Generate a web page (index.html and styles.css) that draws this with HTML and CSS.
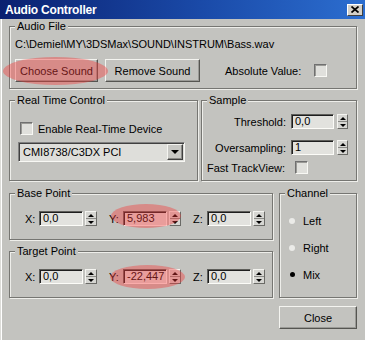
FILE: index.html
```html
<!DOCTYPE html>
<html>
<head>
<meta charset="utf-8">
<title>Audio Controller</title>
<link rel="stylesheet" href="styles.css">
</head>
<body>
<div class="window">
  <div class="titlebar">
    <span class="title">Audio Controller</span>
    <span class="tb-close"><svg width="8" height="7" viewBox="0 0 8 7"><path d="M0.5 0.5 L7.5 6.5 M7.5 0.5 L0.5 6.5" stroke="#000" stroke-width="1.7" fill="none"/></svg></span>
  </div>
  <div class="content">
    <div class="group audio">
      <span class="legend">Audio File</span>
      <div class="path">C:\Demiel\MY\3DSMax\SOUND\INSTRUM\Bass.wav</div>
      <div class="audio-row">
        <div class="marked">
          <button class="btn btn-choose">Choose Sound</button>
          <span class="mark mark-choose"></span>
        </div>
        <button class="btn btn-remove">Remove Sound</button>
        <span class="abs-label">Absolute Value:</span>
        <span class="check"></span>
      </div>
    </div>

    <div class="row2">
      <div class="group rtc">
        <span class="legend">Real Time Control</span>
        <div class="check-row"><span class="check"></span><span class="check-text">Enable Real-Time Device</span></div>
        <div class="combo"><span class="combo-text">CMI8738/C3DX PCI</span><span class="combo-btn"><span class="tri-down"></span></span></div>
      </div>
      <div class="group sample">
        <span class="legend">Sample</span>
        <div class="srow r1"><span class="slabel">Threshold:</span><span class="field fw43">0,0</span><span class="spin s-sample"><span class="up"></span><span class="down"></span></span></div>
        <div class="srow r2"><span class="slabel">Oversampling:</span><span class="field fw43">1</span><span class="spin s-sample"><span class="up"></span><span class="down"></span></span></div>
        <div class="srow r3"><span class="flabel">Fast TrackView:</span><span class="check"></span></div>
      </div>
    </div>

    <div class="row3">
      <div class="points">
        <div class="group pt">
          <span class="legend">Base Point</span>
          <div class="xyz">
            <div class="coord"><span class="lbl">X:</span><span class="field fw44">0,0</span><span class="spin"><span class="up"></span><span class="down"></span></span></div>
            <div class="coord"><span class="lbl">Y:</span><span class="field fw44">5,983</span><span class="spin"><span class="up"></span><span class="down"></span></span><span class="mark mark-y1"></span></div>
            <div class="coord"><span class="lbl">Z:</span><span class="field fw44">0,0</span><span class="spin"><span class="up"></span><span class="down"></span></span></div>
          </div>
        </div>
        <div class="group pt">
          <span class="legend">Target Point</span>
          <div class="xyz">
            <div class="coord"><span class="lbl">X:</span><span class="field fw44">0,0</span><span class="spin"><span class="up"></span><span class="down"></span></span></div>
            <div class="coord"><span class="lbl">Y:</span><span class="field fw44">-22,447</span><span class="spin"><span class="up"></span><span class="down"></span></span><span class="mark mark-y2"></span></div>
            <div class="coord"><span class="lbl">Z:</span><span class="field fw44">0,0</span><span class="spin"><span class="up"></span><span class="down"></span></span></div>
          </div>
        </div>
      </div>
      <div class="group channel">
        <span class="legend">Channel</span>
        <div class="radio"><span class="dot"></span>Left</div>
        <div class="radio"><span class="dot"></span>Right</div>
        <div class="radio"><span class="dot on"></span>Mix</div>
      </div>
    </div>

    <div class="close-row">
      <button class="btn btn-close">Close</button>
    </div>
  </div>
</div>
</body>
</html>
```

FILE: styles.css
```css
* { box-sizing: border-box; }
html, body { margin: 0; padding: 0; background: #c3c3bf; }

.window {
  width: 365px;
  height: 340px;
  overflow: hidden;
  background: #c3c3bf;
  font-family: "Liberation Sans", Arial, sans-serif;
  font-size: 11px;
  color: #000;
  box-shadow: inset 1px 0 0 #dcdcd8, inset 2px 0 0 #ffffff;
}

.titlebar {
  height: 19px;
  display: flex;
  align-items: center;
  justify-content: space-between;
  padding: 0 2px 0 5px;
  background: linear-gradient(90deg, #0a2070 0%, #1a4aa8 55%, #2c6ed0 100%);
}
.title {
  color: #fff;
  font-weight: bold;
  font-size: 12px;
  letter-spacing: -0.2px;
}
.tb-close {
  width: 16px;
  height: 12px;
  display: flex;
  align-items: center;
  justify-content: center;
  background: #d4d0c8;
  border: 1px solid;
  border-color: #fff #404040 #404040 #fff;
}

.content { padding: 7px 8px 0 9px; }

.group {
  position: relative;
  border: 1px solid #767672;
  box-shadow: inset 1px 1px 0 #eeeeea, 1px 1px 0 #eeeeea;
}
.legend {
  position: absolute;
  top: -8px;
  left: 5px;
  padding: 0 2px;
  line-height: 14px;
  background: #c3c3bf;
  white-space: nowrap;
}

/* Audio file */
.audio { height: 63px; padding-left: 5px; }
.path { margin-top: 10px; line-height: 14px; }
.audio-row { display: flex; align-items: center; margin-top: 8px; }
.marked { position: relative; display: flex; }

.btn {
  height: 23px;
  padding: 0;
  font: inherit;
  color: #000;
  background: #c3c3bf;
  border: 1px solid;
  border-color: #f4f4f0 #555551 #555551 #f4f4f0;
  box-shadow: inset -1px -1px 0 #9a9a96;
}
.btn-choose { width: 83px; }
.btn-remove { width: 95px; margin-left: 7px; }
.abs-label { margin-left: 25px; width: 89px; }

.check {
  display: inline-block;
  width: 13px;
  height: 13px;
  flex: none;
  background: #e0e0dc;
  border: 1px solid;
  border-color: #707070 #f8f8f4 #f8f8f4 #707070;
  box-shadow: inset 1px 1px 0 #9a9a96;
}

.mark {
  position: absolute;
  border-radius: 50%;
  background: rgba(245, 55, 55, 0.4);
  pointer-events: none;
}
.mark-choose { left: -12px; top: -2px; width: 105px; height: 28px; }
.mark-y1 { left: 2px; top: -7px; width: 70px; height: 24px; }
.mark-y2 { left: 1px; top: -4px; width: 75px; height: 24px; }

/* Row 2 */
.row2 {
  display: grid;
  grid-template-columns: 189px 156px;
  column-gap: 3px;
  margin-top: 11px;
  height: 81px;
}
.rtc { padding-left: 8px; }
.check-row { display: flex; align-items: center; height: 13px; margin-top: 21px; padding-left: 2px; }
.check-text { margin-left: 5px; }
.combo {
  display: flex;
  align-items: center;
  width: 167px;
  height: 20px;
  margin-top: 7px;
  padding: 0 1px 0 4px;
  background: #dededa;
  border: 1px solid;
  border-color: #808080 #f8f8f4 #f8f8f4 #808080;
  box-shadow: inset 1px 1px 0 #404040;
}
.combo-text { flex: 1; }
.combo-btn {
  width: 16px;
  height: 16px;
  display: flex;
  align-items: center;
  justify-content: center;
  background: #c8c8c4;
  border: 1px solid;
  border-color: #f4f4f0 #404040 #404040 #f4f4f0;
  box-shadow: inset -1px -1px 0 #8a8a86;
}
.tri-down {
  width: 0; height: 0;
  border-left: 4px solid transparent;
  border-right: 4px solid transparent;
  border-top: 4px solid #000;
}

.sample { padding-left: 5px; }
.srow { display: flex; align-items: center; }
.r1 { height: 15px; margin-top: 13px; }
.r2 { height: 15px; margin-top: 11px; }
.r3 { height: 13px; margin-top: 6px; }
.slabel { width: 79px; text-align: right; margin-right: 5px; }
.flabel { width: 88px; }

.field {
  display: inline-block;
  height: 15px;
  line-height: 13px;
  padding-left: 3px;
  background: #e2e2de;
  border: 1px solid;
  border-color: #5e5e5a #fcfcf8 #fcfcf8 #5e5e5a;
  box-shadow: inset 1px 1px 0 #1e1e1e;
  white-space: nowrap;
  overflow: hidden;
}
.fw43 { width: 43px; }
.fw44 { width: 44px; }

.spin {
  display: flex;
  flex-direction: column;
  width: 12px;
  height: 15px;
  margin-left: 2px;
  background: #d6d6d2;
  border: 1px solid;
  border-color: #f4f4f0 #6a6a66 #6a6a66 #f4f4f0;
}
.s-sample { width: 11px; margin-left: 3px; }
.spin .up, .spin .down {
  flex: 1;
  display: flex;
  align-items: center;
  justify-content: center;
}
.spin .up { border-bottom: 1px solid #8a8a86; }
.spin .up::before {
  content: "";
  border-left: 3px solid transparent;
  border-right: 3px solid transparent;
  border-bottom: 3px solid #000;
}
.spin .down::before {
  content: "";
  border-left: 3px solid transparent;
  border-right: 3px solid transparent;
  border-top: 3px solid #000;
}

/* Row 3 */
.row3 {
  display: grid;
  grid-template-columns: 264px 78px;
  column-gap: 6px;
  margin-top: 12px;
}
.points { display: flex; flex-direction: column; gap: 11px; }
.pt { height: 47px; padding: 17px 0 0 15px; }
.xyz { display: flex; gap: 12px; }
.coord { position: relative; display: flex; align-items: center; height: 15px; }
.lbl { width: 14px; }

.channel { height: 105px; padding: 20px 0 0 9px; display: flex; flex-direction: column; gap: 14px; }
.radio { display: flex; align-items: center; height: 13px; }
.dot {
  width: 6px;
  height: 6px;
  border-radius: 50%;
  margin-right: 8px;
  background: #ebebe8;
}
.dot.on { background: #000; width: 5px; height: 5px; margin-left: 1px; margin-right: 8px; }

.close-row { display: flex; justify-content: flex-end; margin-top: 8px; }
.btn-close { width: 78px; }
```
